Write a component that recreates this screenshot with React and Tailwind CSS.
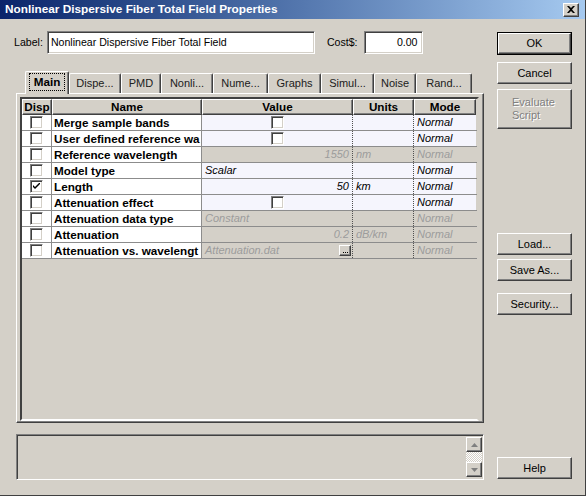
import React from "react";

// classic win32 bevels
const raised =
  "border border-t-white border-l-white border-r-[#404040] border-b-[#404040] shadow-[inset_-1px_-1px_0_#808080]";
const sunken =
  "border border-t-[#808080] border-l-[#808080] border-r-white border-b-white shadow-[inset_1px_1px_0_#404040,inset_-1px_-1px_0_#d4d0c8]";

// names are cut by the column, as in the dialog
const rows = [
  { name: "Merge sample bands", check: true, on: true },
  { name: "User defined reference wa", check: true, on: true },
  { name: "Reference wavelength", value: "1550", right: true, units: "nm", on: false },
  { name: "Model type", value: "Scalar", on: true },
  { name: "Length", value: "50", right: true, units: "km", on: true, disp: true },
  { name: "Attenuation effect", check: true, on: true },
  { name: "Attenuation data type", value: "Constant", on: false },
  { name: "Attenuation", value: "0.2", right: true, units: "dB/km", on: false },
  { name: "Attenuation vs. wavelengt", value: "Attenuation.dat", browse: true, on: false },
];

const tabs = [
  { label: "Main", w: "w-[44px]" },
  { label: "Dispe...", w: "w-[52px]" },
  { label: "PMD", w: "w-[40px]" },
  { label: "Nonli...", w: "w-[52px]" },
  { label: "Nume...", w: "w-[55px]" },
  { label: "Graphs", w: "w-[53px]" },
  { label: "Simul...", w: "w-[53px]" },
  { label: "Noise", w: "w-[42px]" },
  { label: "Rand...", w: "w-[56px]" },
];

const CheckBox = ({ checked }) => (
  <div className={`w-[13px] h-[13px] bg-white flex items-center justify-center ${sunken}`}>
    {checked && (
      <svg width="7" height="7" viewBox="0 0 7 7">
        <path d="M0 2 L0 4 L2 6 L7 1 L7 -1 L2 4 Z" fill="#000" />
      </svg>
    )}
  </div>
);

const Button = ({ children, className = "" }) => (
  <div className={`w-[75px] bg-[#d4d0c8] flex items-center justify-center ${raised} ${className}`}>
    {children}
  </div>
);

const App = () => {
  return (
    <div className="w-[586px] h-[496px] bg-[#d4d0c8] flex flex-col border-r border-b border-[#404040] font-['Liberation_Sans',Arial,sans-serif] text-[11px] text-black overflow-hidden">
      {/* Title bar */}
      <div className="h-[19px] flex items-center justify-between bg-linear-to-r from-[#0a246a] to-[#a6caf0] pl-[5px] pr-[6px]">
        <span className="text-white font-bold text-[11.8px]">
          Nonlinear Dispersive Fiber Total Field Properties
        </span>
        <div className={`w-[16px] h-[14px] bg-[#d4d0c8] flex items-center justify-center ${raised}`}>
          <svg width="8" height="7" viewBox="0 0 8 7">
            <path d="M0 0 L2 0 L4 2 L6 0 L8 0 L5 3.5 L8 7 L6 7 L4 5 L2 7 L0 7 L3 3.5 Z" fill="#000" />
          </svg>
        </div>
      </div>

      <div className="flex flex-1">
        {/* Left column */}
        <div className="w-[497px] flex flex-col">
          {/* Label / cost */}
          <div className="flex items-center mt-[12px] pl-[14px] h-[23px] text-[10.6px]">
            <span>Label:</span>
            <div className={`ml-[4px] w-[268px] h-[23px] bg-white flex items-center pl-[3px] ${sunken}`}>
              Nonlinear Dispersive Fiber Total Field
            </div>
            <span className="ml-[12px]">Cost$:</span>
            <div className={`ml-[6px] w-[59px] h-[23px] bg-white flex items-center justify-end pr-[4px] ${sunken}`}>
              0.00
            </div>
          </div>

          {/* Tabs */}
          <div className="flex items-end mt-[17px] ml-[25px] h-[22px]">
            {tabs.map((t, i) =>
              i === 0 ? (
                <div
                  key={t.label}
                  className={`${t.w} h-[23px] -mb-px relative z-10 bg-[#d4d0c8] border-t border-l border-white border-r border-r-[#404040] rounded-t-[2px] shadow-[inset_-1px_0_0_#808080] flex items-center justify-center pb-[2px]`}
                >
                  <span className="font-bold text-[11.7px] border border-dotted border-black px-[4px] h-[18px] flex items-center">
                    Main
                  </span>
                </div>
              ) : (
                <div
                  key={t.label}
                  className={`${t.w} h-[20px] bg-[#d4d0c8] border-t border-l border-white border-r border-r-[#404040] rounded-t-[2px] shadow-[inset_-1px_0_0_#808080] flex items-center justify-center text-[#202020]`}
                >
                  {t.label}
                </div>
              )
            )}
          </div>

          {/* Tab panel */}
          <div className={`ml-[16px] w-[468px] h-[330px] pt-[3px] pl-[3px] pr-[4px] pb-[1px] ${raised}`}>
            <div className="w-full h-full border-2 border-t-[#404040] border-l-[#404040] border-r-[#d4d0c8] border-b-[#ffffff] flex flex-col">
              {/* Header */}
              <div className="flex h-[16px] font-bold text-[11.7px]">
                {[
                  ["Disp", "w-[30px]"],
                  ["Name", "w-[150px]"],
                  ["Value", "w-[151px]"],
                  ["Units", "w-[61px]"],
                  ["Mode", "w-[62px]"],
                ].map(([h, w]) => (
                  <div key={h} className={`${w} flex items-center justify-center leading-none ${raised}`}>
                    {h}
                  </div>
                ))}
              </div>
              {/* Rows */}
              {rows.map((r) => {
                const bg = r.on ? "bg-[#f5f5fd]" : "bg-[#d4d0c8]";
                const tc = r.on ? "text-black" : "text-[#9c9c9c]";
                return (
                  <div key={r.name} className="flex h-[16px] border-b border-[#8c8c8c]">
                    <div className="w-[30px] bg-white flex items-center justify-center border-r border-[#8c8c8c]">
                      <CheckBox checked={r.disp} />
                    </div>
                    <div className="w-[150px] bg-white font-bold text-[11.7px] pl-[2px] flex items-center whitespace-nowrap overflow-hidden border-r border-[#8c8c8c]">
                      {r.name}
                    </div>
                    <div
                      className={`w-[151px] ${bg} ${tc} italic flex items-center whitespace-nowrap overflow-hidden border-r border-dotted border-[#505050] ${
                        r.check ? "justify-center" : r.right ? "justify-end pr-[3px]" : r.browse ? "justify-between pl-[3px] pr-px" : "pl-[3px]"
                      }`}
                    >
                      {r.check ? <CheckBox /> : r.value}
                      {r.browse && (
                        <div className={`w-[12px] h-[11px] bg-[#d4d0c8] flex items-end justify-center pb-[2px] gap-px ${raised}`}>
                          <span className="w-px h-px bg-black" />
                          <span className="w-px h-px bg-black" />
                          <span className="w-px h-px bg-black" />
                        </div>
                      )}
                    </div>
                    <div className={`w-[61px] ${bg} ${tc} italic pl-[3px] flex items-center border-r border-dotted border-[#505050]`}>
                      {r.units}
                    </div>
                    <div className={`w-[62px] ${bg} ${tc} italic pl-[3px] flex items-center`}>Normal</div>
                  </div>
                );
              })}
            </div>
          </div>

          {/* Message box */}
          <div className={`mt-[11px] ml-[16px] w-[468px] h-[46px] bg-[#d4d0c8] flex justify-end ${sunken}`}>
            <div className="w-[16px] mt-[2px] mb-[2px] mr-[1px] flex flex-col">
              <div className={`h-[15px] bg-[#d4d0c8] flex items-center justify-center ${raised}`}>
                <svg width="7" height="4" viewBox="0 0 7 4">
                  <path d="M3.5 0 L7 4 L0 4 Z" fill="#808080" />
                </svg>
              </div>
              <div className="flex-1 bg-[repeating-conic-gradient(#ffffff_0_25%,#d4d0c8_0_50%)] bg-[length:2px_2px]" />
              <div className={`h-[15px] bg-[#d4d0c8] flex items-center justify-center ${raised}`}>
                <svg width="7" height="4" viewBox="0 0 7 4">
                  <path d="M0 0 L7 0 L3.5 4 Z" fill="#808080" />
                </svg>
              </div>
            </div>
          </div>
        </div>

        {/* Right column buttons */}
        <div className="flex flex-col w-[75px]">
          <div className="mt-[13px] w-[75px] h-[23px] border border-black">
            <Button className="h-full w-full">OK</Button>
          </div>
          <Button className="mt-[7px] h-[22px]">Cancel</Button>
          <Button className="mt-[5px] h-[40px] !justify-start pl-[14px] text-[#808080] [text-shadow:1px_1px_0_#fff] leading-[13px]">
            <span>
              Evaluate
              <br />
              Script
            </span>
          </Button>
          <Button className="mt-[104px] h-[22px]">Load...</Button>
          <Button className="mt-[4px] h-[22px]">Save As...</Button>
          <Button className="mt-[12px] h-[22px]">Security...</Button>
          <Button className="mt-[142px] h-[22px]">Help</Button>
        </div>
      </div>
    </div>
  );
};

export default App;
